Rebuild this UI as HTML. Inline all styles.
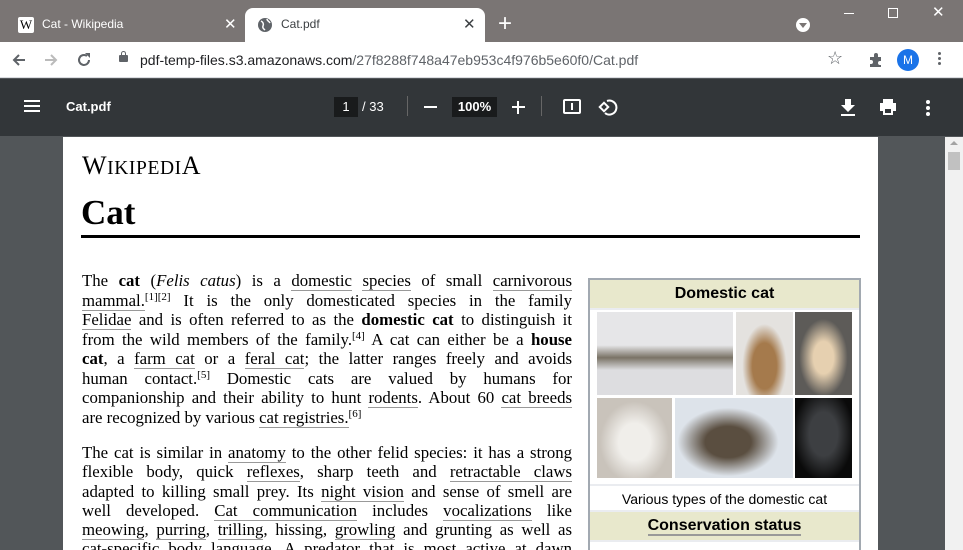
<!DOCTYPE html>
<html><head><meta charset="utf-8"><style>
*{margin:0;padding:0;box-sizing:border-box}
html,body{width:963px;height:550px;overflow:hidden}
body{background:#525659;font-family:"Liberation Sans",sans-serif;position:relative}
.abs{position:absolute}
.tabbar{left:0;top:0;width:963px;height:42px;background:#7a7574}
.tab2{left:245px;top:8px;width:240px;height:34px;background:#fff;border-radius:8px 8px 0 0}
.addr{left:0;top:42px;width:963px;height:36px;background:#fff;border-bottom:1px solid #dadce0}
.tool{left:0;top:79px;width:963px;height:57px;background:#323639;color:#fff}
.page{left:63px;top:137px;width:815px;height:413px;background:#fff}
.l{position:absolute;left:82px;width:490px;font-family:"Liberation Serif",serif;font-size:16.8px;text-align:justify;text-align-last:justify;white-space:nowrap;line-height:19px;color:#000}
.l.nl{text-align-last:left}
u{text-decoration:none;border-bottom:1.5px solid #999}
sup{font-size:11px;vertical-align:6px;line-height:0}
.ib{left:588px;top:278px;width:273px;height:272px;background:#f8f9fa;border:2px solid #a2a9b1;border-bottom:none;overflow:hidden}
.hd{background:#e8e8cc;text-align:center;font-weight:bold;font-size:16px}
.img{position:absolute}
</style></head><body>
<div class="abs tabbar"></div>
<div class="abs" style="left:18px;top:17px;width:16px;height:16px;background:#fff;border-radius:2px;font-family:'Liberation Serif',serif;font-size:13px;line-height:16px;text-align:center;color:#000">W</div>
<div class="abs" style="left:42px;top:17px;font-size:12px;color:#fff">Cat - Wikipedia</div>
<div class="abs" style="left:224px;top:15px;font-size:15px;color:#fff">✕</div>
<div class="abs tab2"></div>
<svg class="abs" style="left:257px;top:17px" width="16" height="16" viewBox="0 0 16 16"><circle cx="8" cy="8" r="7" fill="#5f6368"/><path d="M4 4c2 1 3 3 2 5s1 3 2 4M10 2c0 2 2 2 3 4" stroke="#fff" stroke-width="1.5" fill="none"/></svg>
<div class="abs" style="left:281px;top:17px;font-size:12px;color:#3c4043">Cat.pdf</div>
<div class="abs" style="left:463px;top:15px;font-size:15px;color:#3c4043">✕</div>
<div class="abs" style="left:498px;top:10px;font-size:24px;color:#fff;line-height:28px">+</div>
<div class="abs" style="left:796px;top:18px;width:14px;height:14px;border-radius:50%;background:#fff"></div>
<div class="abs" style="left:799px;top:23px;border:4px solid transparent;border-top:5px solid #7a7574"></div>
<div class="abs" style="left:844px;top:13px;width:10px;height:1px;background:#fff"></div>
<div class="abs" style="left:888px;top:8px;width:10px;height:10px;border:1px solid #fff"></div>
<div class="abs" style="left:932px;top:3px;font-size:15px;color:#fff">✕</div>
<div class="abs addr"></div>
<svg class="abs" style="left:10px;top:51px" width="18" height="18" viewBox="0 0 18 18"><path d="M15 9H4M9 4L4 9l5 5" stroke="#5f6368" stroke-width="2" fill="none"/></svg>
<svg class="abs" style="left:42px;top:51px" width="18" height="18" viewBox="0 0 18 18"><path d="M3 9h11M9 4l5 5-5 5" stroke="#bbb" stroke-width="2" fill="none"/></svg>
<svg class="abs" style="left:75px;top:51px" width="18" height="18" viewBox="0 0 18 18"><path d="M14 9a5 5 0 1 1-2-4" stroke="#5f6368" stroke-width="2" fill="none"/><path d="M10 2h5v5z" fill="#5f6368"/></svg>
<div class="abs" style="left:119px;top:55px;width:9px;height:7px;background:#5f6368;border-radius:1px"></div>
<div class="abs" style="left:121px;top:51px;width:5px;height:6px;border:1.5px solid #5f6368;border-bottom:none;border-radius:3px 3px 0 0"></div>
<div class="abs" style="left:140px;top:52px;font-size:14px;color:#202124">pdf-temp-files.s3.amazonaws.com<span style="color:#5f6368">/27f8288f748a47eb953c4f976b5e60f0/Cat.pdf</span></div>
<div class="abs" style="left:827px;top:48px;font-size:18px;color:#5f6368">☆</div>
<svg class="abs" style="left:868px;top:52px" width="16" height="16" viewBox="0 0 16 16"><path d="M2 5h4V3a2 2 0 0 1 4 0v2h3v4h-1a2 2 0 0 0 0 4h1v2H2v-3h1a2 2 0 0 0 0-4H2z" fill="#5f6368"/></svg>
<div class="abs" style="left:897px;top:49px;width:22px;height:22px;border-radius:50%;background:#1a73e8;color:#fff;font-size:12px;text-align:center;line-height:22px">M</div>
<div class="abs" style="left:938px;top:52px;width:3px;height:3px;background:#5f6368;border-radius:50%;box-shadow:0 5px #5f6368,0 10px #5f6368"></div>
<div class="abs tool"></div>
<div class="abs" style="left:24px;top:100px;width:16px;height:2px;background:#fff;box-shadow:0 5px #fff,0 10px #fff"></div>
<div class="abs" style="left:66px;top:99px;font-size:13px;font-weight:bold;color:#fff">Cat.pdf</div>
<div class="abs" style="left:334px;top:97px;width:24px;height:20px;background:#191b1c;color:#fff;font-size:13px;text-align:center;line-height:20px">1</div>
<div class="abs" style="left:362px;top:99px;font-size:13px;color:#fff">/ 33</div>
<div class="abs" style="left:407px;top:96px;width:1px;height:20px;background:#666"></div>
<div class="abs" style="left:424px;top:106px;width:13px;height:2px;background:#fff"></div>
<div class="abs" style="left:452px;top:97px;width:45px;height:20px;background:#191b1c;color:#fff;font-size:13px;font-weight:bold;text-align:center;line-height:20px">100%</div>
<div class="abs" style="left:512px;top:106px;width:13px;height:2px;background:#fff"></div>
<div class="abs" style="left:517px;top:101px;width:2px;height:13px;background:#fff"></div>
<div class="abs" style="left:541px;top:96px;width:1px;height:20px;background:#666"></div>
<div class="abs" style="left:563px;top:99px;width:18px;height:15px;border:2px solid #fff;border-radius:2px"></div>
<div class="abs" style="left:571px;top:103px;width:2px;height:7px;background:#fff"></div>
<svg class="abs" style="left:598px;top:97px" width="20" height="20" viewBox="0 0 20 20"><path d="M9 4a7 7 0 1 1-2 12" stroke="#fff" stroke-width="2" fill="none"/><rect x="3" y="7" width="6" height="6" transform="rotate(45 6 10)" stroke="#fff" stroke-width="2" fill="none"/></svg>
<svg class="abs" style="left:840px;top:98px" width="16" height="18" viewBox="0 0 16 18"><path d="M5 1h6v6h4l-7 7-7-7h4zM1 16h14v2H1z" fill="#fff"/></svg>
<svg class="abs" style="left:879px;top:99px" width="18" height="16" viewBox="0 0 18 16"><path d="M4 0h10v4H4zM1 4h16v8h-3v4H4v-4H1zM6 10v4h6v-4z" fill="#fff"/></svg>
<div class="abs" style="left:926px;top:100px;width:4px;height:4px;background:#fff;border-radius:50%;box-shadow:0 6px #fff,0 12px #fff"></div>
<div class="abs" style="left:945px;top:137px;width:18px;height:413px;background:#f1f1f1"></div>
<div class="abs" style="left:948px;top:152px;width:12px;height:18px;background:#c1c1c1"></div>
<div class="abs" style="left:950px;top:141px;border:4px solid transparent;border-bottom:4px solid #a3a3a3;border-top:none"></div>
<div class="abs page"></div>
<div class="abs" style="left:82px;top:151px;font-family:'Liberation Serif',serif;font-size:26px;color:#000;letter-spacing:0.6px">W<span style="font-size:19.5px">IKIPEDI</span>A</div>
<div class="abs" style="left:81px;top:193px;font-family:'Liberation Serif',serif;font-size:35px;font-weight:bold;color:#000">Cat</div>
<div class="abs" style="left:81px;top:235px;width:779px;height:3px;background:#000"></div>
<div class="l" style="top:271px">The <b>cat</b> (<i>Felis catus</i>) is a <u>domestic</u> <u>species</u> of small <u>carnivorous</u></div>
<div class="l" style="top:291px"><u>mammal.</u><sup>[1][2]</sup> It is the only domesticated species in the family</div>
<div class="l" style="top:310px"><u>Felidae</u> and is often referred to as the <b>domestic cat</b> to distinguish it</div>
<div class="l" style="top:330px">from the wild members of the family.<sup>[4]</sup> A cat can either be a <b>house</b></div>
<div class="l" style="top:349px"><b>cat</b>, a <u>farm cat</u> or a <u>feral cat</u>; the latter ranges freely and avoids</div>
<div class="l" style="top:369px">human contact.<sup>[5]</sup> Domestic cats are valued by humans for</div>
<div class="l" style="top:388px">companionship and their ability to hunt <u>rodents</u>. About 60 <u>cat breeds</u></div>
<div class="l nl" style="top:408px">are recognized by various <u>cat registries.</u><sup>[6]</sup></div>
<div class="l" style="top:443px">The cat is similar in <u>anatomy</u> to the other felid species: it has a strong</div>
<div class="l" style="top:462px">flexible body, quick <u>reflexes</u>, sharp teeth and <u>retractable claws</u></div>
<div class="l" style="top:482px">adapted to killing small prey. Its <u>night vision</u> and sense of smell are</div>
<div class="l" style="top:501px">well developed. <u>Cat communication</u> includes <u>vocalizations</u> like</div>
<div class="l" style="top:520px"><u>meowing</u>, <u>purring</u>, <u>trilling</u>, hissing, <u>growling</u> and grunting as well as</div>
<div class="l" style="top:539px">cat-specific body language. A predator that is most active at dawn</div>
<div class="abs ib">
<div class="hd" style="height:28px;line-height:28px">Domestic cat</div>
<div style="position:relative;height:176px;background:#fff;border-top:2px solid #eaecf0">
<div class="img" style="left:7px;top:2px;width:136px;height:83px;background:linear-gradient(180deg,#e6e6e8 40%,#7a7366 55%,#dddde0 70%)"></div>
<div class="img" style="left:146px;top:2px;width:57px;height:83px;background:radial-gradient(ellipse at 50% 65%,#a57a4c 30%,#e4e2df 55%)"></div>
<div class="img" style="left:205px;top:2px;width:57px;height:83px;background:radial-gradient(ellipse at 50% 55%,#e6d0b0 25%,#5d5b58 60%)"></div>
<div class="img" style="left:7px;top:88px;width:75px;height:80px;background:radial-gradient(ellipse at 50% 55%,#f0eeea 30%,#c9c3bb 65%)"></div>
<div class="img" style="left:85px;top:88px;width:118px;height:80px;background:radial-gradient(ellipse at 45% 55%,#5a4e40 25%,#dde3ea 55%)"></div>
<div class="img" style="left:205px;top:88px;width:57px;height:80px;background:radial-gradient(ellipse at 50% 45%,#3d3f42 35%,#0a0a0a 75%)"></div>
</div>
<div style="height:28px;line-height:26px;text-align:center;font-size:14px;background:#fff;border-top:2px solid #eaecf0;border-bottom:2px solid #eaecf0">Various types of the domestic cat</div>
<div class="hd" style="height:28px;line-height:28px"><span style="border-bottom:2px solid #999">Conservation status</span></div>
<div style="height:20px;background:#fff;border-top:2px solid #eaecf0"></div>
</div>
</body></html>
